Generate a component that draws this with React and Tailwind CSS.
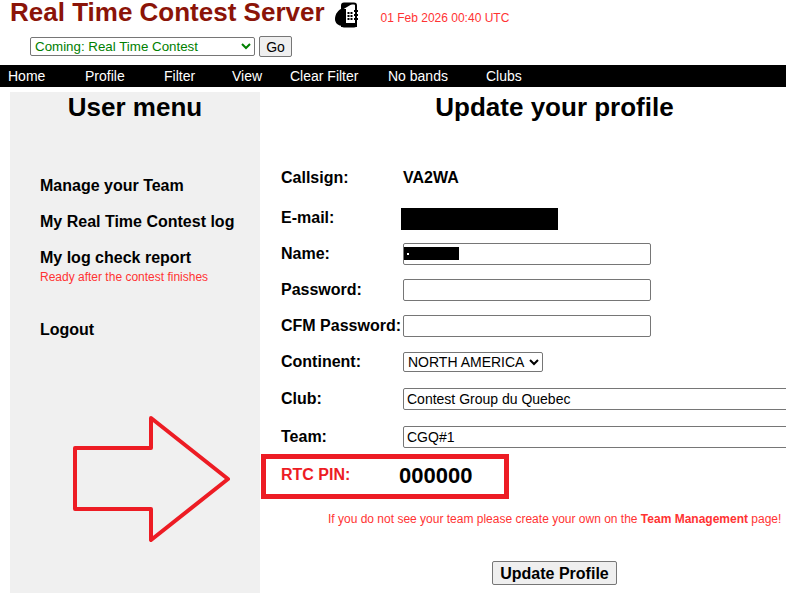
const navItems = [
  ["Home", "w-[77px]"],
  ["Profile", "w-[79px]"],
  ["Filter", "w-[68px]"],
  ["View", "w-[58px]"],
  ["Clear Filter", "w-[98px]"],
  ["No bands", "w-[98px]"],
  ["Clubs", "w-[60px]"],
];

function PhoneIcon() {
  return (
    <svg width="24" height="26" viewBox="0 0 24 26" className="ml-[10px] mt-[-1px] shrink-0">
      <path d="M8 6 C3 8 0 12 0 17 C0 21 3 24 8 24 Z" fill="#000" />
      <rect x="7" y="1.5" width="14" height="23" rx="2" fill="#fff" stroke="#000" strokeWidth="2" />
      <path d="M7 8 L17 2 L7 2 Z" fill="#000" />
      <path d="M6 21 H22 V25 H6 Z" fill="#000" />
      <path d="M6 7 L11 7 L11 21 L6 21 Z" fill="#000" />
      <g fill="#000">
        <rect x="12.5" y="10" width="2" height="2" />
        <rect x="15.5" y="10" width="2" height="2" />
        <rect x="12.5" y="13" width="2" height="2" />
        <rect x="15.5" y="13" width="2" height="2" />
        <rect x="12.5" y="16" width="2" height="2" />
        <rect x="15.5" y="16" width="2" height="2" />
        <rect x="19" y="8" width="4" height="2" />
        <rect x="19" y="12" width="4" height="2" />
        <rect x="19" y="16" width="4" height="2" />
      </g>
    </svg>
  );
}

function Row({ label, className, children }) {
  return (
    <div className={"flex items-center " + className}>
      <span className="w-[122px] shrink-0 text-base font-bold text-black">{label}</span>
      {children}
    </div>
  );
}

function TextBox({ value = "", wide }) {
  return (
    <input
      readOnly
      value={value}
      className={
        "h-[22px] shrink-0 rounded-[2px] border border-[#767676] bg-white px-[3px] text-sm text-black outline-none " +
        (wide ? "w-[420px]" : "w-[248px]")
      }
    />
  );
}

export default function App() {
  return (
    <div className="relative h-[593px] w-[786px] overflow-hidden bg-white font-['Liberation_Sans',Arial,sans-serif]">
      <header className="flex h-[30px] items-center pl-[10px]">
        <h1 className="self-start text-[26px] font-bold leading-[24px] text-[#8b1408]">Real Time Contest Server</h1>
        <PhoneIcon />
        <span className="ml-[22px] mt-[6px] text-xs text-[#ff3333]">01 Feb 2026 00:40 UTC</span>
      </header>

      <div className="flex h-[35px] items-center gap-[4px] pb-[3px] pl-[30px]">
        <select className="h-[19px] w-[225px] rounded-[2px] border border-[#767676] bg-white text-[13.33px] leading-none text-[#008000]">
          <option>Coming: Real Time Contest</option>
        </select>
        <button className="h-[21px] w-[33px] rounded-[2px] border border-[#767676] bg-[#efefef] text-sm text-black">Go</button>
      </div>

      <nav className="flex h-[22px] items-center bg-black pb-[1px] pl-[8px] text-sm text-white">
        {navItems.map(([name, width]) => (
          <span key={name} className={width}>{name}</span>
        ))}
      </nav>

      <div className="flex pt-[5px]">
        <aside className="ml-[10px] h-[501px] w-[250px] shrink-0 bg-[#f0f0f0]">
          <h2 className="text-center text-[26px] font-bold leading-[30px] text-black">User menu</h2>
          <ul className="pl-[30px] pt-[55px] text-base font-bold text-black">
            <li className="leading-[18px]">Manage your Team</li>
            <li className="mt-[18px] leading-[18px]">My Real Time Contest log</li>
            <li className="mt-[18px] leading-[18px]">My log check report</li>
            <li className="mt-[3px] text-xs font-normal leading-[14px] text-[#ff3333]">Ready after the contest finishes</li>
            <li className="mt-[37px] leading-[18px]">Logout</li>
          </ul>
        </aside>

        <main className="min-w-0 flex-1">
          <h2 className="pl-[63px] text-center text-[26px] font-bold leading-[30px] text-black">Update your profile</h2>
          <div className="pl-[21px] pt-[41px]">
            <Row label="Callsign:" className="h-[30px]">
              <span className="text-base font-bold text-black">VA2WA</span>
            </Row>
            <Row label="E-mail:" className="mt-[10px] h-[30px]">
              <span className="-ml-[2px] mt-[2px] h-[22px] w-[157px] bg-black" />
            </Row>
            <Row label="Name:" className="mt-[6px] h-[30px]">
              <div className="relative">
                <TextBox />
                <span className="absolute left-[1px] top-[5px] h-[13px] w-[55px] bg-black" />
                <span className="absolute left-[4px] top-[11px] h-[2px] w-[2px] bg-white" />
              </div>
            </Row>
            <Row label="Password:" className="mt-[6px] h-[30px]">
              <TextBox />
            </Row>
            <Row label="CFM Password:" className="mt-[6px] h-[30px] whitespace-nowrap">
              <TextBox />
            </Row>
            <Row label="Continent:" className="mt-[6px] h-[30px]">
              <select className="h-[20px] w-[140px] rounded-[2px] border border-[#767676] bg-white text-sm leading-none text-black">
                <option>NORTH AMERICA</option>
              </select>
            </Row>
            <Row label="Club:" className="mt-[7px] h-[30px]">
              <TextBox wide value="Contest Group du Quebec" />
            </Row>
            <Row label="Team:" className="mt-[8px] h-[30px]">
              <TextBox wide value="CGQ#1" />
            </Row>
            <div className="mt-[8px] flex h-[30px] items-center">
              <span className="w-[118px] text-base font-bold text-[#ed1c24]">RTC PIN:</span>
              <span className="text-[22px] font-bold text-black">000000</span>
            </div>
          </div>
          <p className="pl-[68px] pt-[22px] text-xs leading-[14px] whitespace-nowrap text-[#ff3333]">
            If you do not see your team please create your own on the <b>Team Management</b> page!
          </p>
          <div className="pl-[232px] pt-[35px]">
            <button className="h-[24px] w-[125px] rounded-[2px] border border-[#767676] bg-[#efefef] text-base font-bold text-black">Update Profile</button>
          </div>
        </main>
      </div>

      {/* annotation drawn over the page */}
      <div className="absolute left-[261px] top-[454px] h-[45px] w-[248px] border-[5px] border-[#ed1c24]" />
      <svg className="absolute left-[70px] top-[412px]" width="165" height="135" viewBox="70 412 165 135">
        <path
          d="M75 448 H151 V418 L228 479 L151 540 V509 H75 Z"
          fill="none"
          stroke="#ed1c24"
          strokeWidth="4"
          strokeLinejoin="round"
        />
      </svg>
    </div>
  );
}
